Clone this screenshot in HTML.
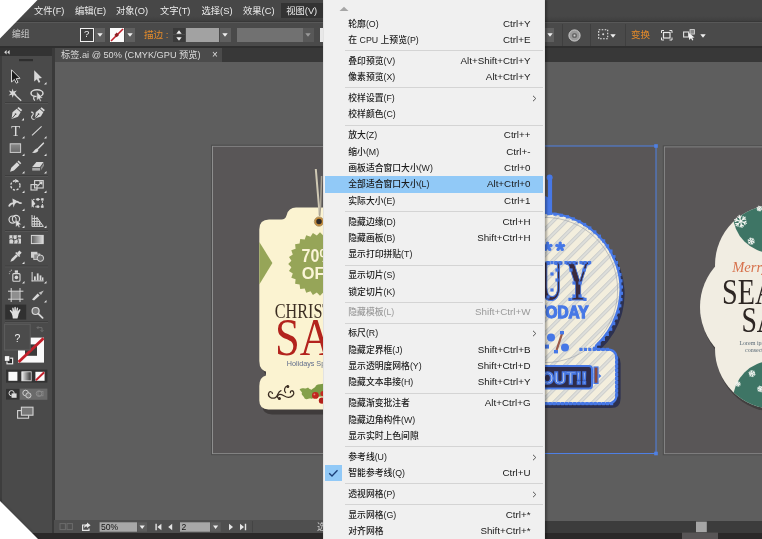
<!DOCTYPE html><html><head><meta charset="utf-8"><title>Illustrator</title><style>
*{box-sizing:border-box;margin:0;padding:0}
html,body{width:762px;height:539px;overflow:hidden;background:#5e5e5e}
body{position:relative;font-family:"Liberation Sans","Noto Sans CJK SC",sans-serif;font-size:9px;color:#e6e6e6}
.abs{position:absolute;will-change:transform}
#menubar{left:0;top:0;width:762px;height:21px;background:linear-gradient(#474747 0,#474747 16px,#3f3f3f 21px)}
#menubar span{position:absolute;top:4.7px;font-size:9.3px;line-height:12px;color:#ececec;white-space:nowrap}
#mbsep{left:0;top:21px;width:762px;height:1.4px;background:#383838}
#ctrl{left:0;top:22.4px;width:762px;height:23.6px;background:#4a4a4a;border-top:1px solid #585858}
#ctrlsep{left:0;top:46px;width:762px;height:2.5px;background:#2f2f2f}
#tabstrip{left:52px;top:48px;width:710px;height:14px;background:#383838}
#tab{left:55px;top:48px;width:167px;height:14px;background:#4b4b4b}
#tab span{position:absolute;left:6px;top:1px;font-size:9.2px;line-height:12px;color:#dcdcdc;white-space:nowrap}
#canvas{left:54px;top:62px;width:708px;height:458px;background:#5e5e5e}
#tools{left:0;top:48px;width:52px;height:491px;background:#4a4a4a}
#toolhead{left:0;top:48px;width:52px;height:8px;background:#333}
#toolgap{left:52px;top:48px;width:3px;height:485px;background:#3a3a3a}
#status{left:54px;top:520px;width:270px;height:13px;background:#4f4f4f}
#hscroll{left:324px;top:520.6px;width:438px;height:12.4px;background:#3c3c3c}
#bottom{left:0;top:533px;width:762px;height:6px;background:#2b2929}
#menu{left:323px;top:0;width:222.3px;height:539px;background:#f0f0f0;border-left:1px solid #e2e2e2;border-right:1px solid #e4e4e4;color:#1a1a1a;box-shadow:1.5px 0 2px rgba(0,0,0,0.3)}
.mi{position:absolute;left:1px;width:217.8px;height:16.4px;line-height:16.4px;font-size:8.8px;white-space:nowrap}
.mi .l{position:absolute;left:23.3px;top:0;font-weight:500}
.mi .r{position:absolute;right:12.3px;top:0;font-size:9.8px}
.mi .a{position:absolute;right:4px;top:0;font-size:9px;color:#444}
.mi.hl{background:#91c9f7}
.mi.dis{color:#9a9a9a}
.ms{position:absolute;left:20.5px;width:198.5px;height:1px;background:#d4d4d4}
</style></head><body>
<div id="canvas" class="abs"></div>
<div id="menubar" class="abs">
<div class="abs" style="left:280.5px;top:3px;width:44px;height:14.6px;background:#333333"></div>
<span style="left:34px">文件(F)</span>
<span style="left:75px">编辑(E)</span>
<span style="left:116px">对象(O)</span>
<span style="left:160px">文字(T)</span>
<span style="left:201.5px">选择(S)</span>
<span style="left:243px">效果(C)</span>
<span style="left:286.2px">视图(V)</span>
</div>
<div id="mbsep" class="abs"></div>
<div id="ctrl" class="abs"></div>
<div id="ctrlsep" class="abs"></div>
<div id="tabstrip" class="abs"></div>
<div id="tab" class="abs"><span>标签.ai @ 50% (CMYK/GPU 预览)</span><i class="abs" style="left:156.5px;top:0.6px;font-style:normal;font-size:10px;line-height:12px;color:#ddd">×</i></div>
<div id="tools" class="abs"></div>
<div id="toolhead" class="abs"></div>
<div id="toolgap" class="abs"></div>
<div id="status" class="abs"></div>
<div id="hscroll" class="abs"></div>
<div id="bottom" class="abs"></div>
<div class="abs" style="left:12px;top:27.8px;font-size:8.8px;line-height:12px;color:#cdcdcd">编组</div>
<div class="abs" style="left:80px;top:28px;width:13.5px;height:13.5px;background:#3f3f3f;border:1.5px solid #f2f2f2;color:#f4f4f4;font-size:9.5px;line-height:10.5px;text-align:center">?</div>
<div class="abs" style="left:94.5px;top:28px;width:9.5px;height:13.5px;background:#5f5f5f"></div>
<svg class="abs" style="left:96.5px;top:33px" width="6" height="4"><path d="M0.3 0.3 L5.7 0.3 L3 3.7 Z" fill="#f0f0f0"/></svg>
<div class="abs" style="left:110px;top:28px;width:13.5px;height:13.5px;background:#fbfbfb"></div>
<svg class="abs" style="left:110px;top:28px" width="14" height="14"><path d="M1 13 L13 1" stroke="#c0202a" stroke-width="1.6"/><path d="M6.7 4.6 L9 6.9 L6.7 9.2 L4.4 6.9 Z" fill="#8e1d22"/></svg>
<div class="abs" style="left:124.5px;top:28px;width:9.5px;height:13.5px;background:#5f5f5f"></div>
<svg class="abs" style="left:126.5px;top:33px" width="6" height="4"><path d="M0.3 0.3 L5.7 0.3 L3 3.7 Z" fill="#f0f0f0"/></svg>
<div class="abs" style="left:144px;top:28.5px;font-size:9.6px;line-height:12px;color:#e28a2b;white-space:nowrap">描边 :</div>
<div class="abs" style="left:173px;top:28px;width:12px;height:6.3px;background:#3a3a3a"></div>
<div class="abs" style="left:173px;top:35px;width:12px;height:6.5px;background:#3a3a3a"></div>
<svg class="abs" style="left:176px;top:29.5px" width="6" height="4"><path d="M0.3 3.7 L5.7 3.7 L3 0.3 Z" fill="#eee"/></svg>
<svg class="abs" style="left:176px;top:36.5px" width="6" height="4"><path d="M0.3 0.3 L5.7 0.3 L3 3.7 Z" fill="#eee"/></svg>
<div class="abs" style="left:186px;top:28px;width:33px;height:13.5px;background:#a2a2a2"></div>
<div class="abs" style="left:219.5px;top:28px;width:10.5px;height:13.5px;background:#5f5f5f"></div>
<svg class="abs" style="left:222px;top:33px" width="6" height="4"><path d="M0.3 0.3 L5.7 0.3 L3 3.7 Z" fill="#f0f0f0"/></svg>
<div class="abs" style="left:236.5px;top:28px;width:66px;height:13.5px;background:#717171"></div>
<div class="abs" style="left:302.5px;top:28px;width:10.5px;height:13.5px;background:#585858"></div>
<svg class="abs" style="left:305px;top:33px" width="6" height="4"><path d="M0.3 0.3 L5.7 0.3 L3 3.7 Z" fill="#9a9a9a"/></svg>
<div class="abs" style="left:319.5px;top:28px;width:5px;height:13.5px;background:#e8e8e8"></div>
<!-- right of menu -->
<div class="abs" style="left:545px;top:28px;width:8.5px;height:13.5px;background:#5f5f5f"></div>
<svg class="abs" style="left:546.5px;top:33px" width="6" height="4"><path d="M0.3 0.3 L5.7 0.3 L3 3.7 Z" fill="#f0f0f0"/></svg>
<div class="abs" style="left:561.5px;top:24px;width:1px;height:22px;background:#3f3f3f"></div>
<div class="abs" style="left:589.5px;top:24px;width:1px;height:22px;background:#3f3f3f"></div>
<div class="abs" style="left:624.5px;top:24px;width:1px;height:22px;background:#3f3f3f"></div>
<svg class="abs" style="left:568px;top:28.5px" width="13" height="13"><circle cx="6.5" cy="6.5" r="5.6" fill="#9a9a9a" stroke="#cfcfcf" stroke-width="1"/><circle cx="6.5" cy="6.5" r="2.6" fill="#6a6a6a"/><circle cx="6.5" cy="6.5" r="1" fill="#d0d0d0"/></svg>
<svg class="abs" style="left:598px;top:29px" width="11" height="11"><rect x="0.7" y="0.7" width="9" height="9" fill="none" stroke="#e6e6e6" stroke-width="1.1" stroke-dasharray="1.6 1.4"/><circle cx="5.2" cy="5.2" r="1" fill="#ddd"/></svg>
<svg class="abs" style="left:609.5px;top:33.5px" width="6" height="4"><path d="M0.3 0.3 L5.7 0.3 L3 3.7 Z" fill="#f0f0f0"/></svg>
<div class="abs" style="left:630.5px;top:28.5px;font-size:9.6px;line-height:12px;color:#e28a2b;white-space:nowrap">变换</div>
<svg class="abs" style="left:660.5px;top:29.5px" width="12" height="11"><rect x="2.5" y="2.5" width="6.5" height="5.5" fill="none" stroke="#e6e6e6" stroke-width="1.2"/><path d="M0.5 3 V0.5 H3 M8.5 0.5 H11 V3 M11 7.5 V10 H8.5 M3 10 H0.5 V7.5" fill="none" stroke="#e6e6e6" stroke-width="1"/></svg>
<svg class="abs" style="left:682.5px;top:29px" width="13" height="12"><rect x="0.6" y="3" width="5" height="5" fill="none" stroke="#dedede" stroke-width="1.1"/><rect x="7" y="0.6" width="4.5" height="4.5" fill="#8a8a8a" stroke="#dedede" stroke-width="0.8"/><path d="M6 4 L6 11 L8 9.2 L9.3 11.6 L10.4 11 L9.2 8.8 L11.5 8.6 Z" fill="#f2f2f2"/></svg>
<svg class="abs" style="left:699.5px;top:33.5px" width="6" height="4"><path d="M0.3 0.3 L5.7 0.3 L3 3.7 Z" fill="#f0f0f0"/></svg>

<svg class="abs" style="left:0;top:0" width="56" height="539" viewBox="0 0 56 539">
<defs>
<linearGradient id="gr1" x1="0" x2="1" y1="0" y2="0"><stop offset="0" stop-color="#5a5a5a"/><stop offset="1" stop-color="#dedede"/></linearGradient>
<linearGradient id="gr3" x1="0" x2="1" y1="0" y2="0"><stop offset="0" stop-color="#f0f0f0"/><stop offset="1" stop-color="#2e2e2e"/></linearGradient>
<linearGradient id="gr2" x1="0" x2="0" y1="0" y2="1"><stop offset="0" stop-color="#8a8a8a"/><stop offset="1" stop-color="#6a6a6a"/></linearGradient>
</defs>
<rect x="0" y="56" width="2" height="483" fill="#3d3d3d"/>
<!-- header arrows -->
<path d="M6.6 50 L4.2 52.2 L6.6 54.4 Z M9.6 50 L7.2 52.2 L9.6 54.4 Z" fill="#d8d8d8"/>
<rect x="19" y="59" width="14" height="2.2" fill="#2e2e2e"/>
<!-- separators -->
<g stroke="#3e3e3e" stroke-width="1">
<path d="M5 102.5 H48 M5 175.5 H48 M5 230.5 H48 M5 266 H48 M5 321.5 H48"/>
</g>
<g stroke="#5a5a5a" stroke-width="1" opacity="0.7">
<path d="M5 103.5 H48 M5 176.5 H48 M5 231.5 H48 M5 267 H48 M5 322.5 H48"/>
</g>
<!-- flyout triangles -->
<g fill="#e2e2e2">
<path d="M46.5 82 L46.5 84.5 L44 84.5 Z"/>
<path d="M24 118 L24 120.5 L21.5 120.5 Z"/>
<path d="M24.5 136 L24.5 138.5 L22 138.5 Z M46.5 136 L46.5 138.5 L44 138.5 Z"/>
<path d="M24.5 153.5 L24.5 156 L22 156 Z M46.5 153.5 L46.5 156 L44 156 Z"/>
<path d="M24.5 171 L24.5 173.5 L22 173.5 Z M46.5 171 L46.5 173.5 L44 173.5 Z"/>
<path d="M24.5 190.5 L24.5 193 L22 193 Z M46.5 190.5 L46.5 193 L44 193 Z"/>
<path d="M24.5 208.5 L24.5 211 L22 211 Z"/>
<path d="M24.5 225.5 L24.5 228 L22 228 Z M46.5 225.5 L46.5 228 L44 228 Z"/>
<path d="M24.5 261.5 L24.5 264 L22 264 Z"/>
<path d="M24.5 281 L24.5 283.5 L22 283.5 Z M46.5 281 L46.5 283.5 L44 283.5 Z"/>
<path d="M46.5 300 L46.5 302.5 L44 302.5 Z"/>
<path d="M24.5 316.5 L24.5 319 L22 319 Z"/>
</g>
<!-- selection tool -->
<path d="M11.5 69.8 L11.5 82 L14.4 79.4 L16.3 83.2 L18 82.4 L16.2 78.7 L20 78.3 Z" fill="#1c1c1c" stroke="#d6d6d6" stroke-width="1"/>
<!-- direct selection -->
<path d="M34.2 70.2 L34.2 81.6 L36.9 79.2 L38.7 82.8 L40.3 82 L38.6 78.5 L42 78.1 Z" fill="#d8d8d8"/>
<!-- magic wand -->
<g stroke="#d8d8d8" stroke-width="1.3" fill="none"><path d="M14.5 94.5 L21.2 100.8"/></g>
<path d="M12.5 88.6 L13.6 91.6 L16.8 90.6 L14.8 93 L17 95.4 L13.8 94.8 L12.6 97.8 L11.8 94.8 L8.6 95.4 L10.8 93.2 L8.8 90.6 L11.8 91.6 Z" fill="#d8d8d8"/>
<!-- lasso -->
<g stroke="#d8d8d8" fill="none"><ellipse cx="37" cy="93.2" rx="6" ry="3.4" stroke-width="1.5"/><path d="M34.6 96 C33 97.5 33.5 99.5 35 100.5" stroke-width="1.2"/></g>
<path d="M36.8 91.6 L36.8 100.6 L38.8 98.8 L40.2 101.4 L41.4 100.8 L40.1 98.2 L42.8 98 Z" fill="#d8d8d8" stroke="#4d4d4d" stroke-width="0.5"/>
<!-- pen -->
<g transform="translate(16.2 113.4) rotate(40)"><path d="M-2.4 -6.5 H2.4 V-4.6 H-2.4 Z M-2.6 -3.8 H2.6 L3.6 1.5 L0 7.2 L-3.6 1.5 Z" fill="#d8d8d8"/><path d="M0 6.5 V1.5" stroke="#4d4d4d" stroke-width="0.9"/><circle cx="0" cy="1" r="0.9" fill="#4d4d4d"/></g>
<!-- curvature -->
<g transform="translate(39.2 113.4) rotate(40)"><path d="M-2.2 -6.2 H2.2 V-4.4 H-2.2 Z M-2.4 -3.6 H2.4 L3.3 1.4 L0 6.6 L-3.3 1.4 Z" fill="#d8d8d8"/><path d="M0 6 V1.5" stroke="#4d4d4d" stroke-width="0.9"/><circle cx="0" cy="1" r="0.9" fill="#4d4d4d"/></g>
<path d="M34.5 119.5 C31 119.5 31 116.5 32.6 115.2 C34 114 33 111.6 31 112.2" stroke="#d8d8d8" stroke-width="1.1" fill="none"/>
<!-- T -->
<text x="15.6" y="135.6" text-anchor="middle" font-family="Liberation Serif, serif" font-size="14.5" fill="#dcdcdc">T</text>
<!-- line -->
<path d="M32 135.4 L41.6 126.4" stroke="#d8d8d8" stroke-width="1.1"/>
<!-- rectangle -->
<rect x="10.2" y="143.8" width="10.4" height="8.6" fill="url(#gr2)" stroke="#cfcfcf" stroke-width="1"/>
<!-- brush -->
<path d="M43.4 143.2 L37.4 149.2" stroke="#d8d8d8" stroke-width="1.6" stroke-linecap="round"/>
<path d="M36.6 148.4 L38.4 150.2 C37.6 152.8 34.4 153.4 31.8 152.6 C33.8 152 34.2 149.4 36.6 148.4 Z" fill="#d8d8d8"/>
<!-- pencil -->
<g transform="translate(15 166.8) rotate(45)"><path d="M-1.9 -7 H1.9 V-5.4 H-1.9 Z M-1.9 -4.6 H1.9 V3.4 L0 7 L-1.9 3.4 Z" fill="#d8d8d8"/></g>
<!-- eraser -->
<path d="M36.4 162 L43.6 162 L40 167 L32.2 167 Z" fill="#d8d8d8"/><path d="M32.2 167.8 L40 167.8 L40 170.6 L32.2 170.6 Z" fill="#a8a8a8"/><path d="M40.8 167.4 L44 162.8 L44 165.8 L40.8 170.4 Z" fill="#8c8c8c"/>
<!-- rotate -->
<circle cx="15.4" cy="185.4" r="4.6" fill="none" stroke="#d8d8d8" stroke-width="1.4" stroke-dasharray="2.2 1.5"/><path d="M15.2 179 L18.6 180.8 L15.2 183 Z" fill="#d8d8d8"/>
<!-- scale -->
<g fill="none" stroke="#d8d8d8" stroke-width="1.1"><rect x="31" y="184.6" width="6" height="5.4"/><rect x="34.6" y="180.6" width="8.6" height="7.4"/><path d="M37.5 186 L41.6 182.2 M39 182 H41.8 V184.6"/></g>
<!-- width tool -->
<path d="M9 206.5 C11 201 13 205 15.4 202.4 C18 199.4 19 205 21.6 202.6" stroke="#d8d8d8" stroke-width="1.8" fill="none"/><path d="M12.4 198.4 L16.4 200.4 L13.4 207.6 Z" fill="#d8d8d8"/>
<!-- free transform -->
<rect x="33" y="199.4" width="9.4" height="7.4" fill="none" stroke="#d8d8d8" stroke-width="1" stroke-dasharray="1.6 1.2"/><g fill="#d8d8d8"><rect x="41.2" y="198.2" width="2.4" height="2.4"/><rect x="41.2" y="205.4" width="2.4" height="2.4"/><rect x="36.6" y="198.2" width="2.4" height="2.4"/><rect x="36.6" y="205.4" width="2.4" height="2.4"/><path d="M31.6 198.8 L31.6 207.4 L35.4 203.8 Z"/></g>
<!-- shape builder -->
<g fill="none" stroke="#d8d8d8" stroke-width="1.2"><circle cx="12.6" cy="219.6" r="3.6"/><circle cx="16" cy="219" r="3.6"/></g><path d="M15.8 219.4 L15.8 227 L17.6 225.4 L18.8 227.6 L20 227 L18.8 224.8 L21.4 224.6 Z" fill="#e4e4e4" stroke="#4d4d4d" stroke-width="0.4"/>
<!-- perspective grid -->
<g stroke="#d8d8d8" stroke-width="1" fill="none"><path d="M32 215 V226.4 H43.4 L36.6 217 M34.4 215.6 V226 M37 217.6 V226 M39.6 221.4 V226 M32 218.6 L37.6 218.6 M32 221.4 L39.8 221.4 M32 224 L41.6 224"/></g>
<!-- mesh -->
<rect x="9.4" y="235.2" width="11.6" height="8.4" fill="#d4d4d4"/><g stroke="#3f3f3f" stroke-width="1" fill="none"><path d="M9.4 239.6 C12 237 14 242 17 238.6 C18.4 237 19.6 238.6 21 238 M13 235.2 C12 238 15 240 13.6 243.6 M17.4 235.2 C16 237.6 19.6 240.6 17.8 243.6"/></g>
<!-- gradient -->
<rect x="31.4" y="235.4" width="11.8" height="8.2" fill="url(#gr1)" stroke="#d8d8d8" stroke-width="1"/>
<!-- eyedropper -->
<g transform="translate(15.6 256.6) rotate(45)"><path d="M-1.6 -7 H1.6 V-3.6 H-1.6 Z" fill="#d8d8d8"/><rect x="-2.8" y="-3.8" width="5.6" height="1.6" fill="#d8d8d8"/><path d="M-1.3 -2 H1.3 V4.6 L0 7.4 L-1.3 4.6 Z" fill="#d8d8d8"/></g>
<!-- blend -->
<rect x="31" y="251.8" width="6.4" height="6" fill="#d0d0d0"/><rect x="33.8" y="254" width="6" height="5.6" fill="#8a8a8a" stroke="#d8d8d8" stroke-width="0.8"/><circle cx="40.4" cy="258.2" r="3.2" fill="#6a6a6a" stroke="#d8d8d8" stroke-width="1"/>
<!-- symbol sprayer -->
<rect x="12.8" y="273.6" width="7.2" height="7.6" rx="1" fill="none" stroke="#d8d8d8" stroke-width="1.1"/><rect x="14.8" y="270.4" width="3.2" height="2.4" fill="#d8d8d8"/><circle cx="16.4" cy="277.4" r="1.8" fill="#d8d8d8"/><g fill="#a8a8a8"><circle cx="10" cy="271.6" r="0.7"/><circle cx="11.4" cy="270.2" r="0.7"/><circle cx="9.4" cy="273.6" r="0.6"/></g>
<!-- graph -->
<g fill="#d8d8d8"><rect x="31.6" y="272" width="1" height="9.4"/><rect x="31.6" y="280.4" width="12" height="1"/><rect x="34" y="276.4" width="1.8" height="4"/><rect x="36.8" y="273.4" width="1.8" height="7"/><rect x="39.6" y="275.4" width="1.8" height="5"/><rect x="42" y="277.4" width="1.4" height="3"/></g>
<!-- artboard -->
<rect x="11.6" y="291.6" width="8" height="7.2" fill="#8e8e8e"/><g stroke="#d8d8d8" stroke-width="1" fill="none"><path d="M11.2 288 V302 M20 288 V302 M8 291.2 H23.4 M8 299.2 H23.4"/></g>
<!-- slice -->
<path d="M32 299.6 L37.6 293.6 L39.6 295.4 L34 300.4 Z" fill="#d8d8d8"/><path d="M38.6 292.8 L43.8 290.4 L41 295 Z" fill="#bdbdbd"/>
<!-- hand (selected) -->
<rect x="5.2" y="304.6" width="21" height="15" fill="#303030"/>
<path d="M11.6 313.2 L10 311.2 C9.4 310.4 10.4 309.6 11.2 310.4 L12.6 311.8 L12.2 308.4 C12.1 307.4 13.4 307.2 13.6 308.2 L14.2 311 L14.4 307.4 C14.4 306.4 15.8 306.4 15.8 307.4 L16 311 L16.8 308 C17 307.1 18.3 307.4 18.1 308.4 L17.6 311.6 L19.2 309.6 C19.8 308.9 20.8 309.6 20.3 310.4 L18.6 314 C18.2 316.6 17.4 318.6 17.4 318.6 L12.8 318.6 C12.8 316.8 12.4 315 11.6 313.2 Z" fill="#dedede"/>
<!-- zoom -->
<circle cx="35.6" cy="311" r="3.5" fill="#7a7a7a" stroke="#d8d8d8" stroke-width="1.2"/><path d="M38.2 313.6 L42.6 317.8" stroke="#d8d8d8" stroke-width="1.8" stroke-linecap="round"/>
<!-- swap / default -->
<g stroke="#6e6e6e" stroke-width="1" fill="none"><path d="M37 327.6 H42 V331.6 M38.4 326.2 L37 327.6 L38.4 329 M40.6 330.2 L42 331.6 L43.4 330.2"/></g>
<!-- stroke box -->
<rect x="18" y="337.6" width="26" height="25" fill="#fafafa"/><rect x="25" y="344.4" width="12" height="11.4" fill="#3b3b3b"/><path d="M18.6 362 L43.6 338.2" stroke="#c4202b" stroke-width="2.8"/>
<!-- fill box -->
<rect x="4.6" y="324.2" width="25.6" height="25.8" fill="#4b4b4b" stroke="#5e5e5e" stroke-width="1"/>
<text x="17.4" y="342" text-anchor="middle" font-family="Liberation Sans, sans-serif" font-size="10.5" fill="#eeeeee">?</text>
<!-- default colours mini -->
<rect x="7" y="358.2" width="5.6" height="5.6" fill="#2a2a2a" stroke="#e8e8e8" stroke-width="1.2"/><rect x="4.4" y="355.8" width="5.4" height="5.4" fill="#f4f4f4" stroke="#2a2a2a" stroke-width="0.6"/>
<!-- colour buttons -->
<rect x="6" y="369.6" width="41.4" height="13" fill="#323232"/>
<rect x="8.4" y="371.8" width="9" height="9" fill="#fafafa"/>
<rect x="21.8" y="371.8" width="9.4" height="9" fill="url(#gr3)" stroke="#e6e6e6" stroke-width="0.8"/>
<rect x="35.4" y="371.8" width="9.2" height="9" fill="#fafafa"/><path d="M35.8 380.4 L44.2 372.2" stroke="#c4202b" stroke-width="2"/>
<!-- draw mode -->
<rect x="6" y="388.6" width="41.4" height="11.2" fill="#6a6a6a"/><rect x="6" y="388.6" width="13.6" height="11.2" fill="#323232"/>
<circle cx="11.6" cy="393.2" r="2.6" fill="none" stroke="#dcdcdc" stroke-width="1"/><rect x="11.6" y="393.4" width="5" height="4.4" fill="#dcdcdc"/>
<circle cx="25.6" cy="393" r="2.8" fill="none" stroke="#cfcfcf" stroke-width="1"/><circle cx="28.4" cy="395.4" r="2.6" fill="#7a7a7a" stroke="#cfcfcf" stroke-width="1"/>
<circle cx="39" cy="393.6" r="2.8" fill="none" stroke="#8a8a8a" stroke-width="1"/><rect x="38" y="391.4" width="5" height="4.4" fill="none" stroke="#8a8a8a" stroke-width="0.8"/>
<!-- screen mode -->
<rect x="17.6" y="410.6" width="11" height="7.6" fill="#4d4d4d" stroke="#d4d4d4" stroke-width="1.1"/><rect x="21.4" y="407.2" width="11.6" height="8" fill="#777" stroke="#d4d4d4" stroke-width="1.1"/>
</svg>

<svg class="abs" style="left:54px;top:62px" width="708" height="459" viewBox="54 62 708 459">
<defs>
<pattern id="stripes" width="9.2" height="9.2" patternUnits="userSpaceOnUse" patternTransform="rotate(-45)"><rect x="0" y="0" width="9.2" height="9.2" fill="#f3eedd"/><rect x="0" y="3" width="9.2" height="3.1" fill="#dddeda"/><rect x="0" y="2.8" width="9.2" height="0.4" fill="#adb1b8"/><rect x="0" y="6" width="9.2" height="0.4" fill="#adb1b8"/></pattern>
<clipPath id="c3a"><circle cx="775" cy="265" r="60"/></clipPath>
<clipPath id="c3b"><circle cx="775" cy="349" r="60"/></clipPath>
<clipPath id="ctag1"><path id="tag1p" d="M259.3 229.6 Q259.3 219.6 269 219.6 L281.4 219.6 Q285.4 219.6 286.6 215.2 Q288.6 207.6 296 207.6 L330 207.6 L330 372.4 L269 372.4 Q259.3 371.4 259.3 361 Z"/></clipPath>
</defs>
<rect x="212.5" y="146.2" width="218" height="307.5" fill="#595657" stroke="#8e8e8e" stroke-width="1"/>
<rect x="211.5" y="145.2" width="220" height="309.5" fill="none" stroke="#4e4e4e" stroke-width="1"/>
<rect x="438" y="146" width="218" height="307.5" fill="#595657" stroke="#4f80e4" stroke-width="1"/>
<rect x="664.3" y="146.8" width="120" height="307" fill="#595657" stroke="#8e8e8e" stroke-width="1"/>
<rect x="663.3" y="145.8" width="122" height="309" fill="none" stroke="#4e4e4e" stroke-width="1"/>
<rect x="654.2" y="144.2" width="3.6" height="3.6" fill="#4f80e4"/><rect x="654.2" y="451.7" width="3.6" height="3.6" fill="#4f80e4"/>
<path d="M262.6 384 H330 V414.4 H272 Q262.6 414.4 262.6 406 Z" fill="#3f3b3b"/>
<path d="M262.4 362 H330 V376.4 H270 Q263 375 262.4 366 Z" fill="#413d3d"/>
<use href="#tag1p" fill="#fbf3d1"/>
<path d="M330 371 L266 371 L266 375.4 Q259.3 377 259.3 386 L259.3 400.6 Q259.3 409.4 268.4 409.4 L330 409.4 Z" fill="#fbf3d1"/>
<path d="M259.3 242 L272.4 263 L259.3 284.4 Z" fill="#96a558"/>
<polygon points="351.8,264.0 348.6,267.2 351.0,271.1 347.2,273.5 348.7,277.8 344.4,279.3 344.9,283.8 340.4,284.4 339.8,288.9 335.3,288.4 333.8,292.7 329.5,291.2 327.1,295.0 323.2,292.6 320.0,295.8 316.8,292.6 312.9,295.0 310.5,291.2 306.2,292.7 304.7,288.4 300.2,288.9 299.6,284.4 295.1,283.8 295.6,279.3 291.3,277.8 292.8,273.5 289.0,271.1 291.4,267.2 288.2,264.0 291.4,260.8 289.0,256.9 292.8,254.5 291.3,250.2 295.6,248.7 295.1,244.2 299.6,243.6 300.2,239.1 304.7,239.6 306.2,235.3 310.5,236.8 312.9,233.0 316.8,235.4 320.0,232.2 323.2,235.4 327.1,233.0 329.5,236.8 333.8,235.3 335.3,239.6 339.8,239.1 340.4,243.6 344.9,244.2 344.4,248.7 348.7,250.2 347.2,254.5 351.0,256.9 348.6,260.8" fill="#96a558"/>
<text x="301.6" y="262.3" font-family="Liberation Sans, sans-serif" font-weight="bold" font-size="18.2" fill="#fbf5d8" textLength="32" lengthAdjust="spacingAndGlyphs">70%</text>
<text x="301.8" y="279.4" font-family="Liberation Sans, sans-serif" font-weight="bold" font-size="16.4" fill="#fbf5d8">OFF</text>
<text transform="translate(274.8 318.3) scale(0.755 1)" font-family="Liberation Serif, serif" font-size="21.4" fill="#3b2d22">CHRISTMAS</text>
<text transform="translate(275 355) scale(0.84 1)" font-family="Liberation Serif, serif" font-size="53" fill="#b3231d">SALE</text>
<text x="286.8" y="366" font-family="Liberation Sans, sans-serif" font-size="7.2" fill="#5f6c8c">Holidays Special</text>
<g fill="none" stroke="#3b2d22" stroke-width="1.25" stroke-linecap="round"><path d="M272.4 393.4 C272.4 391.4 269.4 391 268.6 393.4 C267.6 396.8 272 399.4 275.4 397.6 C278.6 396 277.4 391.4 281 390.6"/><path d="M279.6 398.6 C277 398.6 276.6 395.6 279 394.6 C282 393.4 285 397.6 288.6 397.4 C292 397.2 294.6 394.4 293.6 392 C292.8 390 290 390.6 290.4 392.6"/><path d="M285.6 392.6 C283.6 390.6 284.4 386.6 287.4 386"/><circle cx="287.8" cy="386.4" r="0.9" fill="#3b2d22"/><circle cx="279.4" cy="398.4" r="0.9" fill="#3b2d22"/></g>
<path d="M299.6 389.6 C302.6 387 305 389.6 308 387.4 C310 390 313 389 314.6 392 C312.6 394.4 314.6 397 312 399 C309 397.6 307.6 400.4 304.6 398.6 C304.4 395.6 300.6 395.4 302 392.4 Z" fill="#84a04b"/>
<path d="M311 391 C312 387.6 315 388.6 316 385.4 C318.6 383.6 321 385 324 383.6 L328 396 L314 397 Z" fill="#7b9a45"/>
<circle cx="315.4" cy="395.4" r="3.4" fill="#c0261f"/><circle cx="322" cy="400.6" r="3.2" fill="#b3211c"/><circle cx="323" cy="393.6" r="2.6" fill="#c42a22"/><circle cx="314.4" cy="394.4" r="0.9" fill="#e8827a"/>
<path d="M315.8 169 L319 207 L319.4 215" stroke="#cfc8b4" stroke-width="2" fill="none"/>
<path d="M321.6 176 L320.6 206 L319.6 216" stroke="#a8a294" stroke-width="1.5" fill="none"/>
<circle cx="319" cy="221.6" r="3.6" fill="#2f2b28" stroke="#c48c3c" stroke-width="1.7"/>
<circle cx="319" cy="221.6" r="4.7" fill="none" stroke="#8a6a3a" stroke-width="0.6"/>
<path d="M540 213 L547 213 A76.5 76.5 0 0 1 596 345.6 L596 349.4 L607 349.4 Q616.6 349.4 616.6 359 L616.6 394 Q616.6 403.6 607 403.6 L540 403.6 Z" transform="translate(4 4.4)" fill="#2d3150"/>
<path d="M540 213 L547 213 A76.5 76.5 0 0 1 596 345.6 L596 349.4 L607 349.4 Q616.6 349.4 616.6 359 L616.6 394 Q616.6 403.6 607 403.6 L540 403.6 Z" fill="url(#stripes)" stroke="#4778e6" stroke-width="2.2"/>
<circle cx="545" cy="290" r="72.6" fill="none" stroke="#9aa0a8" stroke-width="0.6"/>
<path d="M550 177 V214" stroke="#4778e6" stroke-width="4.2"/><circle cx="549.6" cy="177.6" r="3" fill="#4778e6"/><path d="M545 196 L552 199 L552 215 L545 214 Z" fill="#4778e6"/>
<rect x="547.2" y="212.0" width="3.2" height="3.2" fill="#4778e6"/>
<rect x="553.5" y="212.6" width="3.2" height="3.2" fill="#4778e6"/>
<rect x="559.7" y="213.7" width="3.2" height="3.2" fill="#4778e6"/>
<rect x="565.8" y="215.2" width="3.2" height="3.2" fill="#4778e6"/>
<rect x="571.7" y="217.3" width="3.2" height="3.2" fill="#4778e6"/>
<rect x="577.5" y="219.9" width="3.2" height="3.2" fill="#4778e6"/>
<rect x="583.0" y="222.9" width="3.2" height="3.2" fill="#4778e6"/>
<rect x="588.2" y="226.4" width="3.2" height="3.2" fill="#4778e6"/>
<rect x="593.2" y="230.3" width="3.2" height="3.2" fill="#4778e6"/>
<rect x="597.8" y="234.6" width="3.2" height="3.2" fill="#4778e6"/>
<rect x="602.0" y="239.3" width="3.2" height="3.2" fill="#4778e6"/>
<rect x="605.9" y="244.3" width="3.2" height="3.2" fill="#4778e6"/>
<rect x="609.3" y="249.5" width="3.2" height="3.2" fill="#4778e6"/>
<rect x="612.3" y="255.1" width="3.2" height="3.2" fill="#4778e6"/>
<rect x="614.8" y="260.9" width="3.2" height="3.2" fill="#4778e6"/>
<rect x="616.8" y="266.8" width="3.2" height="3.2" fill="#4778e6"/>
<rect x="618.3" y="272.9" width="3.2" height="3.2" fill="#4778e6"/>
<rect x="619.3" y="279.2" width="3.2" height="3.2" fill="#4778e6"/>
<rect x="619.8" y="285.4" width="3.2" height="3.2" fill="#4778e6"/>
<rect x="619.8" y="291.7" width="3.2" height="3.2" fill="#4778e6"/>
<rect x="619.3" y="298.0" width="3.2" height="3.2" fill="#4778e6"/>
<rect x="618.2" y="304.2" width="3.2" height="3.2" fill="#4778e6"/>
<rect x="616.7" y="310.3" width="3.2" height="3.2" fill="#4778e6"/>
<rect x="614.6" y="316.3" width="3.2" height="3.2" fill="#4778e6"/>
<rect x="612.1" y="322.0" width="3.2" height="3.2" fill="#4778e6"/>
<rect x="609.1" y="327.6" width="3.2" height="3.2" fill="#4778e6"/>
<rect x="605.7" y="332.8" width="3.2" height="3.2" fill="#4778e6"/>
<rect x="601.8" y="337.8" width="3.2" height="3.2" fill="#4778e6"/>
<rect x="597.5" y="342.4" width="3.2" height="3.2" fill="#4778e6"/>
<rect x="592.9" y="346.7" width="3.2" height="3.2" fill="#4778e6"/>
<rect x="579.4" y="347.8" width="3.2" height="3.2" fill="#4778e6"/>
<rect x="583.8" y="347.8" width="3.2" height="3.2" fill="#4778e6"/>
<rect x="588.2" y="347.8" width="3.2" height="3.2" fill="#4778e6"/>
<rect x="592.6" y="347.8" width="3.2" height="3.2" fill="#4778e6"/>
<rect x="597.0" y="347.8" width="3.2" height="3.2" fill="#4778e6"/>
<rect x="601.4" y="347.8" width="3.2" height="3.2" fill="#4778e6"/>
<rect x="605.8" y="347.8" width="3.2" height="3.2" fill="#4778e6"/>
<rect x="615.0" y="356.4" width="3.2" height="3.2" fill="#4778e6"/>
<rect x="615.0" y="360.5" width="3.2" height="3.2" fill="#4778e6"/>
<rect x="615.0" y="364.6" width="3.2" height="3.2" fill="#4778e6"/>
<rect x="615.0" y="368.7" width="3.2" height="3.2" fill="#4778e6"/>
<rect x="615.0" y="372.8" width="3.2" height="3.2" fill="#4778e6"/>
<rect x="615.0" y="376.9" width="3.2" height="3.2" fill="#4778e6"/>
<rect x="615.0" y="381.0" width="3.2" height="3.2" fill="#4778e6"/>
<rect x="615.0" y="385.1" width="3.2" height="3.2" fill="#4778e6"/>
<rect x="615.0" y="389.2" width="3.2" height="3.2" fill="#4778e6"/>
<rect x="615.0" y="393.3" width="3.2" height="3.2" fill="#4778e6"/>
<rect x="544.4" y="402.0" width="3.2" height="3.2" fill="#4778e6"/>
<rect x="548.5" y="402.0" width="3.2" height="3.2" fill="#4778e6"/>
<rect x="552.6" y="402.0" width="3.2" height="3.2" fill="#4778e6"/>
<rect x="556.7" y="402.0" width="3.2" height="3.2" fill="#4778e6"/>
<rect x="560.8" y="402.0" width="3.2" height="3.2" fill="#4778e6"/>
<rect x="564.9" y="402.0" width="3.2" height="3.2" fill="#4778e6"/>
<rect x="569.0" y="402.0" width="3.2" height="3.2" fill="#4778e6"/>
<rect x="573.1" y="402.0" width="3.2" height="3.2" fill="#4778e6"/>
<rect x="577.2" y="402.0" width="3.2" height="3.2" fill="#4778e6"/>
<rect x="581.3" y="402.0" width="3.2" height="3.2" fill="#4778e6"/>
<rect x="585.4" y="402.0" width="3.2" height="3.2" fill="#4778e6"/>
<rect x="589.5" y="402.0" width="3.2" height="3.2" fill="#4778e6"/>
<rect x="593.6" y="402.0" width="3.2" height="3.2" fill="#4778e6"/>
<rect x="597.7" y="402.0" width="3.2" height="3.2" fill="#4778e6"/>
<rect x="601.8" y="402.0" width="3.2" height="3.2" fill="#4778e6"/>
<rect x="605.9" y="402.0" width="3.2" height="3.2" fill="#4778e6"/>
<rect x="610.0" y="402.0" width="3.2" height="3.2" fill="#4778e6"/>
<g fill="#4778e6">
<circle cx="547.6" cy="246.6" r="2.9"/>
<circle cx="547.6" cy="243.1" r="1.7"/>
<circle cx="550.9" cy="245.5" r="1.7"/>
<circle cx="549.7" cy="249.4" r="1.7"/>
<circle cx="545.5" cy="249.4" r="1.7"/>
<circle cx="544.3" cy="245.5" r="1.7"/>
<circle cx="560.2" cy="246.6" r="2.9"/>
<circle cx="560.2" cy="243.1" r="1.7"/>
<circle cx="563.5" cy="245.5" r="1.7"/>
<circle cx="562.3" cy="249.4" r="1.7"/>
<circle cx="558.1" cy="249.4" r="1.7"/>
<circle cx="556.9" cy="245.5" r="1.7"/>
</g>
<text transform="translate(563 300) scale(0.60 1)" text-anchor="end" font-family="Liberation Serif, serif" font-weight="bold" font-size="57" fill="#3a2a3e" stroke="#4778e6" stroke-width="1.2">U</text>
<text transform="translate(565.4 300) scale(0.60 1)" font-family="Liberation Serif, serif" font-weight="bold" font-size="57" fill="#3a2a3e" stroke="#4778e6" stroke-width="1.2">Y</text>
<rect x="546.4" y="261.0" width="3.2" height="3.2" fill="#4778e6"/>
<rect x="550.4" y="261.0" width="3.2" height="3.2" fill="#4778e6"/>
<rect x="554.4" y="261.0" width="3.2" height="3.2" fill="#4778e6"/>
<rect x="558.4" y="261.0" width="3.2" height="3.2" fill="#4778e6"/>
<rect x="564.4" y="261.0" width="3.2" height="3.2" fill="#4778e6"/>
<rect x="568.4" y="261.0" width="3.2" height="3.2" fill="#4778e6"/>
<rect x="572.4" y="261.0" width="3.2" height="3.2" fill="#4778e6"/>
<rect x="579.4" y="261.0" width="3.2" height="3.2" fill="#4778e6"/>
<rect x="583.4" y="261.0" width="3.2" height="3.2" fill="#4778e6"/>
<rect x="588.0" y="261.0" width="3.2" height="3.2" fill="#4778e6"/>
<rect x="572.4" y="281.4" width="3.2" height="3.2" fill="#4778e6"/>
<rect x="578.4" y="281.4" width="3.2" height="3.2" fill="#4778e6"/>
<rect x="572.4" y="294.4" width="3.2" height="3.2" fill="#4778e6"/>
<rect x="578.4" y="294.4" width="3.2" height="3.2" fill="#4778e6"/>
<rect x="568.4" y="297.8" width="3.2" height="3.2" fill="#4778e6"/>
<rect x="583.4" y="297.8" width="3.2" height="3.2" fill="#4778e6"/>
<rect x="550.4" y="288.4" width="3.2" height="3.2" fill="#4778e6"/>
<rect x="546.4" y="295.4" width="3.2" height="3.2" fill="#4778e6"/>
<rect x="555.4" y="268.4" width="3.2" height="3.2" fill="#4778e6"/>
<rect x="555.4" y="278.4" width="3.2" height="3.2" fill="#4778e6"/>
<rect x="550.4" y="272.4" width="3.2" height="3.2" fill="#4778e6"/>
<rect x="569.4" y="268.4" width="3.2" height="3.2" fill="#4778e6"/>
<rect x="582.4" y="268.4" width="3.2" height="3.2" fill="#4778e6"/>
<text x="536.5" y="318.4" font-family="Liberation Sans, sans-serif" font-weight="bold" font-size="16.6" fill="#4778e6" stroke="#4778e6" stroke-width="1.3" textLength="52" lengthAdjust="spacingAndGlyphs">TODAY</text>
<path d="M556.6 350 L562.4 332.6" stroke="#9a5a4a" stroke-width="2.2"/>
<g fill="#4778e6"><circle cx="551" cy="337.6" r="4"/><circle cx="565" cy="347.6" r="4"/><rect x="545" y="344.6" width="4" height="4"/><rect x="554" y="350" width="4" height="3.4"/><rect x="560" y="331" width="4" height="3.4"/></g>
<rect x="538" y="366" width="54" height="22.4" rx="3" fill="#2f2d4c" stroke="#4778e6" stroke-width="2"/>
<text x="541" y="384" font-family="Liberation Sans, sans-serif" font-weight="bold" font-size="15.6" fill="#f3eedd" stroke="#4778e6" stroke-width="1.6" textLength="46" lengthAdjust="spacingAndGlyphs">OUT!!</text>
<rect x="594" y="367" width="4" height="16.4" fill="#8d4a3c" stroke="#4778e6" stroke-width="1.2"/><path d="M598.6 373.6 L601.4 376 L598.6 378.6 Z" fill="#4778e6"/>
<g fill="#423f3f" transform="translate(1 3)"><circle cx="762" cy="307" r="62"/><circle cx="775" cy="349" r="60"/></g>
<g fill="#f1ede2"><circle cx="775" cy="265" r="60"/><circle cx="762" cy="307" r="62"/><circle cx="775" cy="349" r="60"/></g>
<circle cx="772" cy="214" r="39" fill="#3e7565" clip-path="url(#c3a)"/>
<circle cx="772" cy="400" r="39" fill="#3e7565" clip-path="url(#c3b)"/>
<g stroke="#f2f5f0" stroke-width="1.2" stroke-linecap="round"><path d="M740.6 221.4 L746.5 223.2"/><path d="M743.9 222.4 L746.0 221.2"/><path d="M743.9 222.4 L745.0 224.6"/><path d="M740.6 221.4 L742.0 227.4"/><path d="M741.4 224.7 L743.5 226.0"/><path d="M741.4 224.7 L740.0 226.8"/><path d="M740.6 221.4 L736.1 225.6"/><path d="M738.1 223.7 L738.0 226.2"/><path d="M738.1 223.7 L735.6 223.6"/><path d="M740.6 221.4 L734.7 219.6"/><path d="M737.3 220.4 L735.2 221.6"/><path d="M737.3 220.4 L736.2 218.2"/><path d="M740.6 221.4 L739.2 215.4"/><path d="M739.8 218.1 L737.7 216.8"/><path d="M739.8 218.1 L741.2 216.0"/><path d="M740.6 221.4 L745.1 217.2"/><path d="M743.1 219.1 L743.2 216.6"/><path d="M743.1 219.1 L745.6 219.2"/></g>
<g stroke="#f2f5f0" stroke-width="0.9" stroke-linecap="round"><path d="M751.2 241.2 L754.4 242.2"/><path d="M753.0 241.8 L754.2 241.1"/><path d="M753.0 241.8 L753.6 243.0"/><path d="M751.2 241.2 L752.0 244.5"/><path d="M751.6 243.0 L752.8 243.7"/><path d="M751.6 243.0 L750.9 244.2"/><path d="M751.2 241.2 L748.7 243.5"/><path d="M749.8 242.5 L749.8 243.8"/><path d="M749.8 242.5 L748.5 242.4"/><path d="M751.2 241.2 L748.0 240.2"/><path d="M749.4 240.6 L748.2 241.3"/><path d="M749.4 240.6 L748.8 239.4"/><path d="M751.2 241.2 L750.4 237.9"/><path d="M750.8 239.4 L749.6 238.7"/><path d="M750.8 239.4 L751.5 238.2"/><path d="M751.2 241.2 L753.7 238.9"/><path d="M752.6 239.9 L752.6 238.6"/><path d="M752.6 239.9 L753.9 240.0"/></g>
<g stroke="#f2f5f0" stroke-width="0.8" stroke-linecap="round"><path d="M759.4 208.6 L761.9 209.4"/><path d="M760.8 209.0 L761.7 208.5"/><path d="M760.8 209.0 L761.2 209.9"/><path d="M759.4 208.6 L760.0 211.1"/><path d="M759.7 210.0 L760.6 210.5"/><path d="M759.7 210.0 L759.2 210.9"/><path d="M759.4 208.6 L757.5 210.4"/><path d="M758.4 209.6 L758.3 210.6"/><path d="M758.4 209.6 L757.3 209.5"/><path d="M759.4 208.6 L756.9 207.8"/><path d="M758.0 208.2 L757.1 208.7"/><path d="M758.0 208.2 L757.6 207.3"/><path d="M759.4 208.6 L758.8 206.1"/><path d="M759.1 207.2 L758.2 206.7"/><path d="M759.1 207.2 L759.6 206.3"/><path d="M759.4 208.6 L761.3 206.8"/><path d="M760.4 207.6 L760.5 206.6"/><path d="M760.4 207.6 L761.5 207.7"/></g>
<g stroke="#f2f5f0" stroke-width="0.9" stroke-linecap="round"><path d="M752.0 373.6 L755.1 374.5"/><path d="M753.7 374.1 L754.8 373.5"/><path d="M753.7 374.1 L754.3 375.3"/><path d="M752.0 373.6 L752.7 376.7"/><path d="M752.4 375.3 L753.5 376.0"/><path d="M752.4 375.3 L751.7 376.4"/><path d="M752.0 373.6 L749.7 375.8"/><path d="M750.7 374.8 L750.7 376.1"/><path d="M750.7 374.8 L749.4 374.7"/><path d="M752.0 373.6 L748.9 372.7"/><path d="M750.3 373.1 L749.2 373.7"/><path d="M750.3 373.1 L749.7 371.9"/><path d="M752.0 373.6 L751.3 370.5"/><path d="M751.6 371.9 L750.5 371.2"/><path d="M751.6 371.9 L752.3 370.8"/><path d="M752.0 373.6 L754.3 371.4"/><path d="M753.3 372.4 L753.3 371.1"/><path d="M753.3 372.4 L754.6 372.5"/></g>
<g stroke="#f2f5f0" stroke-width="0.9" stroke-linecap="round"><path d="M760.4 389.0 L763.3 389.9"/><path d="M762.0 389.5 L763.0 388.9"/><path d="M762.0 389.5 L762.5 390.6"/><path d="M760.4 389.0 L761.1 391.9"/><path d="M760.8 390.6 L761.8 391.2"/><path d="M760.8 390.6 L760.1 391.6"/><path d="M760.4 389.0 L758.2 391.0"/><path d="M759.2 390.1 L759.2 391.3"/><path d="M759.2 390.1 L758.0 390.1"/><path d="M760.4 389.0 L757.5 388.1"/><path d="M758.8 388.5 L757.8 389.1"/><path d="M758.8 388.5 L758.3 387.4"/><path d="M760.4 389.0 L759.7 386.1"/><path d="M760.0 387.4 L759.0 386.8"/><path d="M760.0 387.4 L760.7 386.4"/><path d="M760.4 389.0 L762.6 387.0"/><path d="M761.6 387.9 L761.6 386.7"/><path d="M761.6 387.9 L762.8 387.9"/></g>
<g stroke="#f2f5f0" stroke-width="0.8" stroke-linecap="round"><path d="M738.0 384.0 L740.3 384.7"/><path d="M739.3 384.4 L740.1 383.9"/><path d="M739.3 384.4 L739.7 385.2"/><path d="M738.0 384.0 L738.5 386.3"/><path d="M738.3 385.3 L739.1 385.8"/><path d="M738.3 385.3 L737.8 386.1"/><path d="M738.0 384.0 L736.2 385.6"/><path d="M737.0 384.9 L737.0 385.9"/><path d="M737.0 384.9 L736.1 384.8"/><path d="M738.0 384.0 L735.7 383.3"/><path d="M736.7 383.6 L735.9 384.1"/><path d="M736.7 383.6 L736.3 382.8"/><path d="M738.0 384.0 L737.5 381.7"/><path d="M737.7 382.7 L736.9 382.2"/><path d="M737.7 382.7 L738.2 381.9"/><path d="M738.0 384.0 L739.8 382.4"/><path d="M739.0 383.1 L739.0 382.1"/><path d="M739.0 383.1 L739.9 383.2"/></g>
<text x="732.2" y="271.8" font-family="Liberation Serif, serif" font-style="italic" font-size="14.6" fill="#d7714c">Merry</text>
<text transform="translate(722 304.2) scale(0.77 1)" font-family="Liberation Serif, serif" font-size="36.6" fill="#2d2623">SEASON</text>
<text transform="translate(741.4 331.8) scale(0.77 1)" font-family="Liberation Serif, serif" font-size="36" fill="#2d2623">SALE</text>
<text x="739.4" y="344.6" font-family="Liberation Serif, serif" font-size="6" fill="#5a6a76">Lorem ipsum</text>
<text x="745" y="351.8" font-family="Liberation Serif, serif" font-size="6" fill="#5a6a76">consectetur</text>
</svg>
<svg class="abs" style="left:54px;top:520px" width="708" height="19" viewBox="54 520 708 19">
<!-- gpu icon (dim) -->
<g fill="none" stroke="#6c6c6c" stroke-width="1"><rect x="60" y="523.6" width="5.4" height="6"/><rect x="67" y="523.6" width="5.4" height="6"/></g>
<!-- share -->
<path d="M82 524.4 H85.4 V525.6 H83.2 V529.8 H88.4 V528.6 H89.6 V531 H82 Z" fill="#e4e4e4"/><path d="M87 522.4 L90.6 525.2 L87 528 V526.4 C85.4 526.4 84.6 527 84 528.2 C84 525.6 85.2 524.2 87 524 Z" fill="#e4e4e4"/>
<!-- zoom field -->
<rect x="99.6" y="522.3" width="37.4" height="9.4" fill="#a8a8a8"/>
<text x="101" y="530.4" font-family="Liberation Sans, sans-serif" font-size="8.6" fill="#151515">50%</text>
<rect x="137.4" y="522.3" width="9.6" height="9.4" fill="#5d5d5d"/><path d="M139.6 525.6 H144.8 L142.2 529 Z" fill="#ededed"/>
<!-- first / prev -->
<path d="M155.4 523.8 H156.8 V530.2 H155.4 Z M161.4 523.8 V530.2 L157.4 527 Z" fill="#e4e4e4"/>
<path d="M172.2 523.8 V530.2 L168.2 527 Z" fill="#e4e4e4"/>
<rect x="180" y="522.3" width="30" height="9.4" fill="#a8a8a8"/>
<text x="181.6" y="530.4" font-family="Liberation Sans, sans-serif" font-size="8.6" fill="#151515">2</text>
<rect x="210.4" y="522.3" width="10.4" height="9.4" fill="#5d5d5d"/><path d="M213 525.6 H218.2 L215.6 529 Z" fill="#ededed"/>
<path d="M229 523.8 V530.2 L233 527 Z" fill="#e4e4e4"/>
<path d="M240 523.8 V530.2 L244 527 Z M244.8 523.8 H246.2 V530.2 H244.8 Z" fill="#e4e4e4"/>
<rect x="252" y="521" width="1" height="11.5" fill="#444"/>
<!-- scrollbar thumb -->
<rect x="696" y="521.6" width="10.8" height="10.6" fill="#a6a6a6"/>
<rect x="682" y="532.6" width="36" height="6.4" fill="#585556"/>
</svg>
<div class="abs" style="left:316.5px;top:521px;font-size:9.4px;line-height:12px;color:#cfcfcf;white-space:nowrap">选择</div>

<div id="menu" class="abs">
<svg class="abs" style="left:15px;top:6px" width="11" height="6"><path d="M0.5 5 L5 0.8 L9.5 5 Z" fill="#a6a6a6"/></svg>
<div class="mi" style="top:15.6px"><span class="l">轮廓(O)</span><span class="r">Ctrl+Y</span></div>
<div class="mi" style="top:32.0px"><span class="l">在 CPU 上预览(P)</span><span class="r">Ctrl+E</span></div>
<div class="ms" style="top:50.1px"></div>
<div class="mi" style="top:52.8px"><span class="l">叠印预览(V)</span><span class="r">Alt+Shift+Ctrl+Y</span></div>
<div class="mi" style="top:69.2px"><span class="l">像素预览(X)</span><span class="r">Alt+Ctrl+Y</span></div>
<div class="ms" style="top:87.3px"></div>
<div class="mi" style="top:90.0px"><span class="l">校样设置(F)</span><svg class="abs" style="right:5.5px;top:5px" width="5" height="7"><path d="M1 0.8 L3.8 3.5 L1 6.2" stroke="#555" stroke-width="1" fill="none"/></svg></div>
<div class="mi" style="top:106.4px"><span class="l">校样颜色(C)</span></div>
<div class="ms" style="top:124.5px"></div>
<div class="mi" style="top:127.2px"><span class="l">放大(Z)</span><span class="r">Ctrl++</span></div>
<div class="mi" style="top:143.6px"><span class="l">缩小(M)</span><span class="r">Ctrl+-</span></div>
<div class="mi" style="top:160.0px"><span class="l">画板适合窗口大小(W)</span><span class="r">Ctrl+0</span></div>
<div class="mi hl" style="top:176.4px"><span class="l">全部适合窗口大小(L)</span><span class="r">Alt+Ctrl+0</span></div>
<div class="mi" style="top:192.8px"><span class="l">实际大小(E)</span><span class="r">Ctrl+1</span></div>
<div class="ms" style="top:210.9px"></div>
<div class="mi" style="top:213.6px"><span class="l">隐藏边缘(D)</span><span class="r">Ctrl+H</span></div>
<div class="mi" style="top:230.0px"><span class="l">隐藏画板(B)</span><span class="r">Shift+Ctrl+H</span></div>
<div class="mi" style="top:246.4px"><span class="l">显示打印拼贴(T)</span></div>
<div class="ms" style="top:264.5px"></div>
<div class="mi" style="top:267.2px"><span class="l">显示切片(S)</span></div>
<div class="mi" style="top:283.6px"><span class="l">锁定切片(K)</span></div>
<div class="ms" style="top:301.7px"></div>
<div class="mi dis" style="top:304.4px"><span class="l">隐藏模板(L)</span><span class="r">Shift+Ctrl+W</span></div>
<div class="ms" style="top:322.5px"></div>
<div class="mi" style="top:325.2px"><span class="l">标尺(R)</span><svg class="abs" style="right:5.5px;top:5px" width="5" height="7"><path d="M1 0.8 L3.8 3.5 L1 6.2" stroke="#555" stroke-width="1" fill="none"/></svg></div>
<div class="mi" style="top:341.6px"><span class="l">隐藏定界框(J)</span><span class="r">Shift+Ctrl+B</span></div>
<div class="mi" style="top:358.0px"><span class="l">显示透明度网格(Y)</span><span class="r">Shift+Ctrl+D</span></div>
<div class="mi" style="top:374.4px"><span class="l">隐藏文本串接(H)</span><span class="r">Shift+Ctrl+Y</span></div>
<div class="ms" style="top:392.5px"></div>
<div class="mi" style="top:395.2px"><span class="l">隐藏渐变批注者</span><span class="r">Alt+Ctrl+G</span></div>
<div class="mi" style="top:411.6px"><span class="l">隐藏边角构件(W)</span></div>
<div class="mi" style="top:428.0px"><span class="l">显示实时上色间隙</span></div>
<div class="ms" style="top:446.1px"></div>
<div class="mi" style="top:448.8px"><span class="l">参考线(U)</span><svg class="abs" style="right:5.5px;top:5px" width="5" height="7"><path d="M1 0.8 L3.8 3.5 L1 6.2" stroke="#555" stroke-width="1" fill="none"/></svg></div>
<div class="mi" style="top:465.2px"><div class="abs" style="left:0;top:0;width:16.5px;height:16.4px;background:#91c9f7"></div><svg class="abs" style="left:3px;top:4px" width="11" height="9"><path d="M1.2 4.2 L4 7 L9.5 1.2" stroke="#1c3f78" stroke-width="1.3" fill="none"/></svg><span class="l">智能参考线(Q)</span><span class="r">Ctrl+U</span></div>
<div class="ms" style="top:483.3px"></div>
<div class="mi" style="top:486.0px"><span class="l">透视网格(P)</span><svg class="abs" style="right:5.5px;top:5px" width="5" height="7"><path d="M1 0.8 L3.8 3.5 L1 6.2" stroke="#555" stroke-width="1" fill="none"/></svg></div>
<div class="ms" style="top:504.1px"></div>
<div class="mi" style="top:506.8px"><span class="l">显示网格(G)</span><span class="r">Ctrl+*</span></div>
<div class="mi" style="top:523.2px"><span class="l">对齐网格</span><span class="r">Shift+Ctrl+*</span></div>
</div>
<svg class="abs" style="left:0;top:0" width="40" height="40"><path d="M0 0 L37.5 0 L0 38.5 Z" fill="#fff"/></svg>
<svg class="abs" style="left:0;top:479px" width="60" height="60"><defs><linearGradient id="shd" x1="0" y1="1" x2="0.5" y2="0.5"><stop offset="0.5" stop-color="#000" stop-opacity="0.28"/><stop offset="0.78" stop-color="#000" stop-opacity="0"/></linearGradient></defs><path d="M0 6 L0 22 L38 60 L54 60 Z" fill="url(#shd)"/><path d="M0 22 L38 60 L0 60 Z" fill="#fff"/></svg>
</body></html>
